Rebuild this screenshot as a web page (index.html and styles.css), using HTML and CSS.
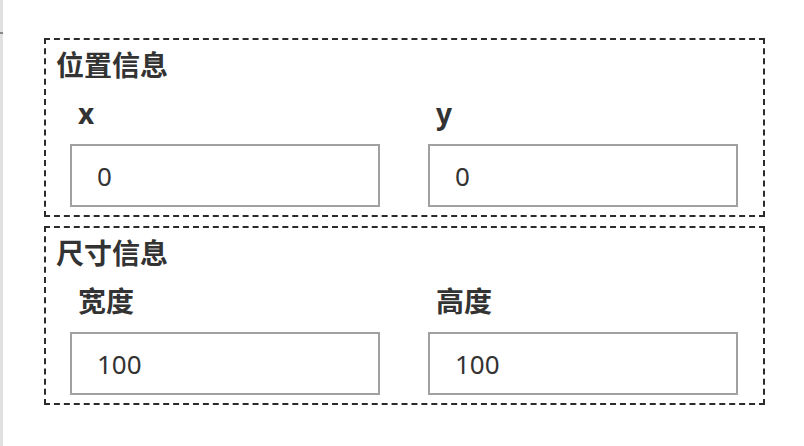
FILE: index.html
```html
<!DOCTYPE html>
<html lang="zh-CN">
<head>
    <meta charset="UTF-8">
    <meta name="viewport" content="width=device-width, initial-scale=1.0">
    <title>属性面板</title>
    <link rel="stylesheet" href="styles.css">
</head>
<body>
    <div class="panel">
        <div class="group">
            <div class="group-title">位置信息</div>
            <div class="fields">
                <div class="field">
                    <label for="posX">x</label>
                    <input id="posX" type="text" value="0">
                </div>
                <div class="field">
                    <label for="posY">y</label>
                    <input id="posY" type="text" value="0">
                </div>
            </div>
        </div>
        <div class="group">
            <div class="group-title">尺寸信息</div>
            <div class="fields">
                <div class="field">
                    <label for="width">宽度</label>
                    <input id="width" type="text" value="100">
                </div>
                <div class="field">
                    <label for="height">高度</label>
                    <input id="height" type="text" value="100">
                </div>
            </div>
        </div>
    </div>
</body>
</html>
```

FILE: styles.css
```css
body{
    margin: 0;
    background: #fff;
    color: #333;
    font-family: "Noto Sans", "Noto Sans CJK SC", sans-serif;
}
.panel{
    position: relative;
    box-sizing: border-box;
    min-height: 446px;
    border-left: 3px solid #e0e0e0;
    padding: 38px 39px 0 41px;
}
.panel::before{
    content: "";
    position: absolute;
    left: -3px;
    top: 32px;
    width: 3px;
    height: 2px;
    background: #888;
}
.group{
    border: 2px dashed #2b2b2b;
    padding: 8px 10px;
}
.group + .group{
    margin-top: 9px;
}
.group-title{
    font-size: 28px;
    font-weight: bold;
    line-height: 34px;
}
.fields{
    display: grid;
    grid-template-columns: 310px 310px;
    column-gap: 48px;
    padding-left: 14px;
}
.field label{
    display: block;
    margin: 15px 0;
    padding-left: 8px;
    font-size: 28px;
    font-weight: bold;
    line-height: 32px;
}
.field input{
    display: block;
    box-sizing: border-box;
    width: 310px;
    height: 63px;
    margin: 0;
    border: 2px solid #a0a0a0;
    padding: 0 0 0 25px;
    background: #fff;
    color: #333;
    font-family: inherit;
    font-size: 26px;
    outline: none;
}
```
